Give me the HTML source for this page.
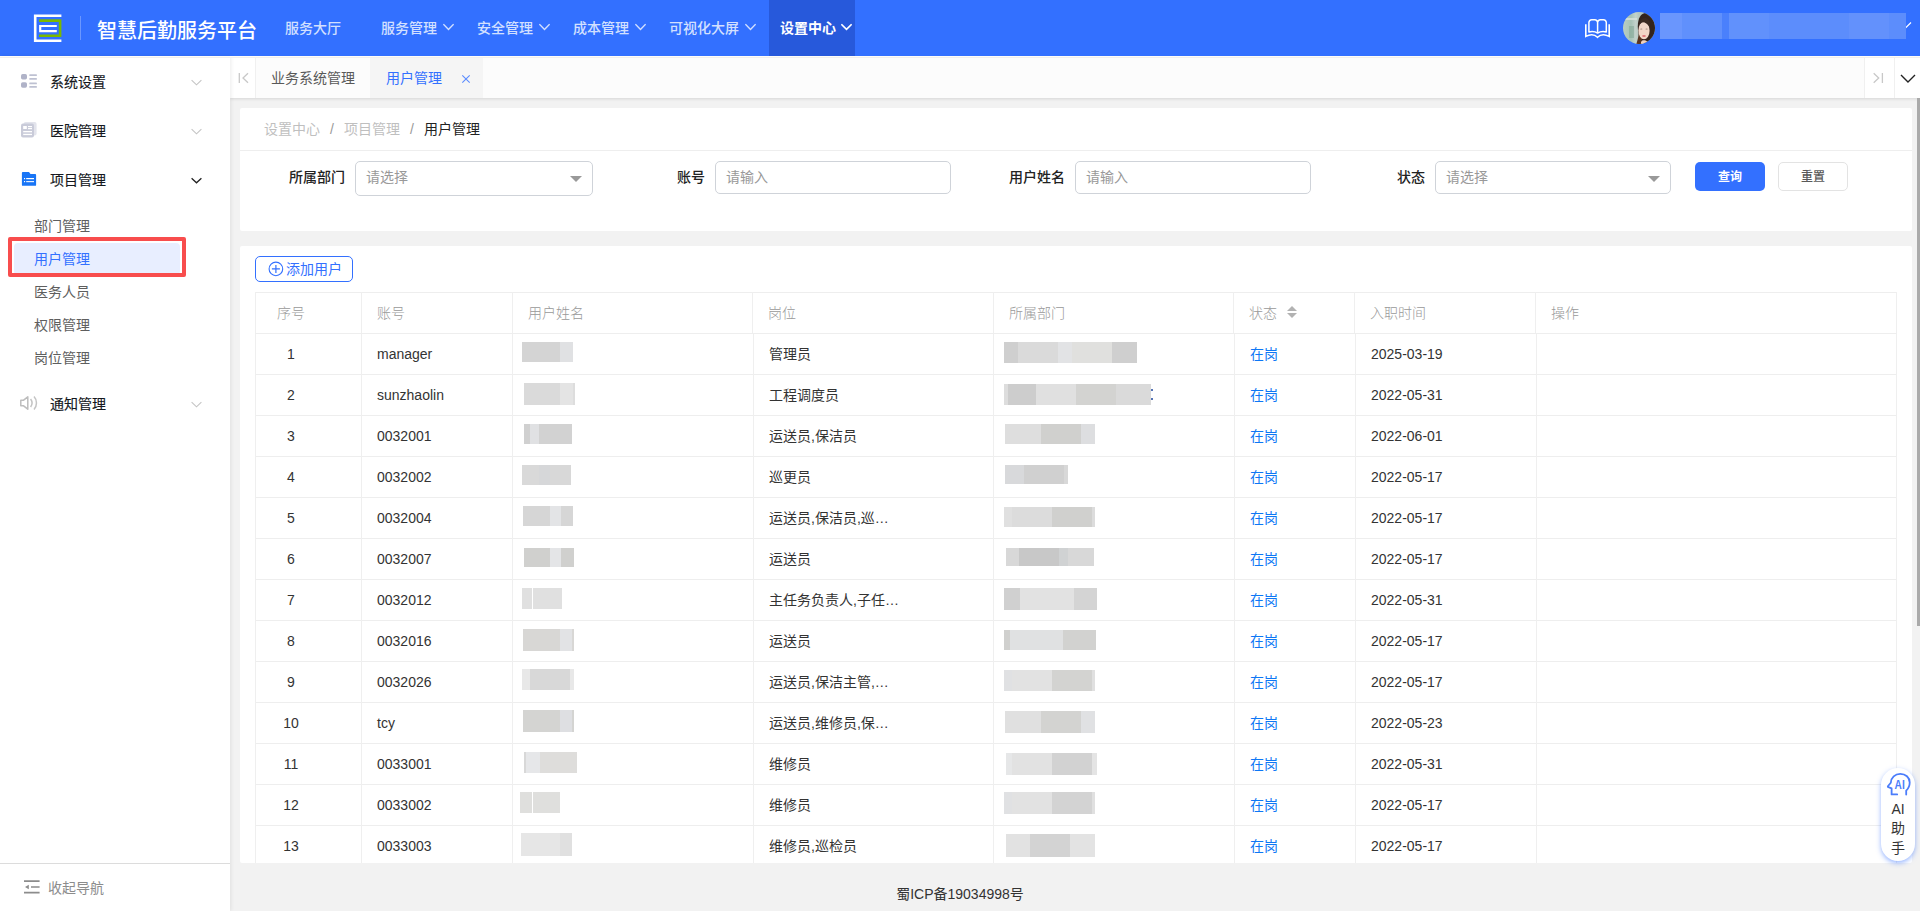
<!DOCTYPE html>
<html lang="zh-CN">
<head>
<meta charset="utf-8">
<title>智慧后勤服务平台</title>
<style>
*{box-sizing:border-box;margin:0;padding:0}
html,body{width:1920px;height:911px;overflow:hidden}
body{position:relative;background:#f2f2f2;font-family:"Liberation Sans","Noto Sans CJK SC",sans-serif;font-size:14px;color:#333;line-height:1}
.abs{position:absolute}
.t{position:absolute;white-space:nowrap;line-height:20px;height:20px}
/* header */
#hd{position:absolute;left:0;top:0;width:1920px;height:56px;background:#3370ff}
#hd .title{left:97px;top:21px;font-size:20px;color:#fff;font-weight:500}
#hd .nav{top:18px;font-size:14px;color:#d3e0ff;font-weight:500}
#hd .nav.on{color:#fff;font-weight:700}
#hd svg.cv{position:absolute;top:23px;width:11px;height:8px}
/* sidebar */
#sb{z-index:2;position:absolute;left:0;top:56px;width:230px;height:855px;background:#fff;box-shadow:1px 0 4px rgba(0,0,0,.08)}
#sb .m1{left:50px;font-size:14px;font-weight:400;color:#15181d;-webkit-text-stroke:0.15px #15181d}
#sb .m2{left:34px;font-size:14px;color:#5e5e5e}
/* tabs */
#tb{position:absolute;left:230px;top:58px;width:1690px;height:40px;background:#fcfcfc;box-shadow:0 1px 3px rgba(0,0,0,.12)}
/* panels */
.pn{position:absolute;background:#fff;left:240px;width:1672px;border-radius:2px}
.lb{font-weight:500;color:#222}
.inp{position:absolute;top:161px;height:33px;border:1px solid #cfd3d9;border-radius:5px;background:#fff}
.ph{color:#999}
.th{color:#999;font-weight:300}
.td{color:#333}
/* table */
#tbl{position:absolute;left:255px;top:292px;width:1642px;border-collapse:collapse;table-layout:fixed;font-size:14px}
</style>
</head>
<body>
<div id="hd">
<svg class="abs" style="left:33px;top:13px" width="30" height="30" viewBox="0 0 30 30">
<path d="M28.4 2.7H2.2V27.7H28.4" fill="none" stroke="#fff" stroke-width="2.6"/>
<path d="M6 7.6H27.1V22.8H6" fill="none" stroke="#7ab800" stroke-width="2.6"/>
<path d="M23.8 13H7.2V18.1H23.8" fill="none" stroke="#fff" stroke-width="2.2"/>
</svg>
<div class="abs" style="left:80px;top:16px;width:1px;height:24px;background:rgba(255,255,255,.28)"></div>
<div class="t title">智慧后勤服务平台</div>
<div class="t nav" style="left:285px">服务大厅</div>
<div class="t nav" style="left:381px">服务管理</div><svg class="cv" style="left:443px" viewBox="0 0 11 8"><path d="M0.4 1.2L5.5 6.4L10.6 1.2" fill="none" stroke="#d3e0ff" stroke-width="1.4"/></svg>
<div class="t nav" style="left:477px">安全管理</div><svg class="cv" style="left:539px" viewBox="0 0 11 8"><path d="M0.4 1.2L5.5 6.4L10.6 1.2" fill="none" stroke="#d3e0ff" stroke-width="1.4"/></svg>
<div class="t nav" style="left:573px">成本管理</div><svg class="cv" style="left:635px" viewBox="0 0 11 8"><path d="M0.4 1.2L5.5 6.4L10.6 1.2" fill="none" stroke="#d3e0ff" stroke-width="1.4"/></svg>
<div class="t nav" style="left:669px">可视化大屏</div><svg class="cv" style="left:745px" viewBox="0 0 11 8"><path d="M0.4 1.2L5.5 6.4L10.6 1.2" fill="none" stroke="#d3e0ff" stroke-width="1.4"/></svg>
<div class="abs" style="left:769px;top:0;width:86px;height:56px;background:#2759db"></div>
<div class="t nav on" style="left:780px">设置中心</div><svg class="cv" style="left:841px" viewBox="0 0 11 8"><path d="M0.4 1.2L5.5 6.4L10.6 1.2" fill="none" stroke="#fff" stroke-width="1.6"/></svg>
<svg class="abs" style="left:1583px;top:16px" width="30" height="24" viewBox="0 0 30 24">
<path d="M14.600 6.600V16.600M14.600 6.600C14.600 5 13.400 3.800 11.800 3.800H8.700C7.100 3.800 5.900 5 5.900 6.600V15.900C9.200 15.200 12.200 15.500 14.600 17.100C17 15.500 20 15.200 23.300 15.900V6.600C23.300 5 22.100 3.800 20.500 3.800H17.400C15.800 3.800 14.600 5 14.600 6.600Z" fill="none" stroke="#fff" stroke-width="1.500" stroke-linejoin="round"/>
<path d="M2.800 8.200V20.400C7.400 18 11.600 18.400 14.500 21.300C17.400 18.400 21.600 18 26.200 20.400V8.200" fill="none" stroke="#fff" stroke-width="1.600" stroke-linejoin="miter"/>
</svg>
<svg class="abs" style="left:1623px;top:12px" width="32" height="32" viewBox="0 0 32 32">
<defs><clipPath id="avc"><circle cx="16" cy="16" r="16"/></clipPath>
<linearGradient id="avg" x1="0" y1="0" x2="1" y2="0"><stop offset="0" stop-color="#b9cdc3"/><stop offset="0.250" stop-color="#a7c3b7"/><stop offset="0.400" stop-color="#c3d2cc"/><stop offset="0.500" stop-color="#b4c6be"/></linearGradient></defs>
<g clip-path="url(#avc)">
<rect width="32" height="32" fill="url(#avg)"/>
<rect x="6" y="14" width="5" height="12" fill="#7fa594" opacity=".55"/>
<rect x="2" y="6" width="12" height="2" fill="#d8e2dc" opacity=".8"/>
<path d="M15 18C14 8 17 1 23 1C29 1 33 8 32 20C31.500 26 30 30 28 32H22L16 24Z" fill="#33241d"/>
<path d="M16.500 18C15.500 24 14.500 29 13 33H19V24Z" fill="#5a3420"/>
<ellipse cx="21" cy="18.500" rx="5.600" ry="8.800" fill="#f1d6c7"/>
<path d="M15.500 14C16.500 8 20 5 24 6.500C27 8 27.500 12 27 16C25 11.500 21 9.500 18 10.500C17 11.500 16.200 13 15.500 14Z" fill="#3a2920"/>
<path d="M18 30C19 27.500 23 27.500 24.500 30V33H18Z" fill="#f3d2bd"/>
<ellipse cx="18.300" cy="17" rx="1.100" ry=".6" fill="#a38778"/><ellipse cx="23.600" cy="17" rx="1.100" ry=".6" fill="#a38778"/>
<ellipse cx="21" cy="24" rx="1.900" ry=".9" fill="#e0767a"/>
</g></svg>
<svg class="abs" style="left:1896px;top:22px" width="16" height="9" viewBox="0 0 16 9"><path d="M1 1.500L8 7.500L15 0.500" fill="none" stroke="#fff" stroke-width="1.200"/></svg>
<div class="abs" style="left:1660px;top:13px;width:246px;height:26px;background:#5c8dfc"></div>
<div class="abs" style="left:1660px;top:13px;width:22px;height:26px;background:#6a96fd"></div>
<div class="abs" style="left:1682px;top:13px;width:40px;height:26px;background:#6090fc"></div>
<div class="abs" style="left:1722px;top:13px;width:7px;height:26px;background:#4a80fc"></div>
<div class="abs" style="left:1729px;top:13px;width:40px;height:26px;background:#6191fc"></div>
<div class="abs" style="left:1849px;top:13px;width:40px;height:26px;background:#6391fc"></div>
</div>
<div id="sb">
<!-- icons -->
<svg class="abs" style="left:20px;top:17px" width="18" height="16" viewBox="0 0 18 16">
<rect x="1" y="1.100" width="6" height="5.400" rx="1.700" fill="#b0b3c8"/><rect x="1" y="9.200" width="6" height="5.500" rx="1.700" fill="#b0b3c8"/>
<rect x="9.300" y="1.300" width="7.600" height="1.800" rx="0.500" fill="#bec1d2"/><rect x="9.300" y="4.900" width="7.600" height="1.800" rx="0.500" fill="#bec1d2"/>
<rect x="9.300" y="9.400" width="7.600" height="1.800" rx="0.500" fill="#bec1d2"/><rect x="9.300" y="13" width="7.600" height="1.800" rx="0.500" fill="#bec1d2"/>
</svg>
<svg class="abs" style="left:20px;top:65px" width="18" height="18" viewBox="0 0 18 18">
<rect x="3.600" y="1" width="13" height="13.500" rx="2" fill="#e3e4ec"/>
<rect x="1" y="2.600" width="13" height="14" rx="2" fill="#c9cbd9"/>
<rect x="3.200" y="5" width="3.600" height="3" fill="#fff"/><rect x="8" y="5" width="4" height="1.200" fill="#fff"/><rect x="8" y="7" width="4" height="1.200" fill="#fff"/>
<rect x="3.200" y="10" width="8.800" height="1.300" fill="#fff"/><rect x="3.200" y="12.800" width="8.800" height="1.300" fill="#fff"/>
</svg>
<svg class="abs" style="left:21px;top:116px" width="16" height="15" viewBox="0 0 16 15">
<path d="M1.800 0H8L9.500 2H14.200Q15.100 2 15.100 2.900V12.900Q15.100 13.800 14.200 13.800H1.800Q0.900 13.800 0.900 12.900V0.900Q0.900 0 1.800 0Z" fill="#1875f6"/>
<rect x="5.200" y="6" width="7.800" height="1.200" fill="#fff"/><rect x="5.200" y="9" width="7.800" height="1.200" fill="#e8f1ff"/>
<rect x="3" y="6" width="1.100" height="1.200" fill="#fff"/><rect x="3" y="9" width="1.100" height="1.200" fill="#fff"/>
</svg>
<svg class="abs" style="left:19px;top:338px" width="20" height="18" viewBox="0 0 20 18">
<path d="M1.800 6.200H4.600L8.800 2.800V15.200L4.600 11.800H1.800Z" fill="none" stroke="#bdbdbd" stroke-width="1.500" stroke-linejoin="round"/>
<path d="M11.600 5C13.300 7.300 13.300 10.700 11.600 13" fill="none" stroke="#c4c4c4" stroke-width="1.500"/>
<path d="M15 2.600C18.300 6.200 18.300 11.800 15 15.400" fill="none" stroke="#c4c4c4" stroke-width="1.500"/>
</svg>
<div class="t m1" style="top:16px">系统设置</div>
<div class="t m1" style="top:65px">医院管理</div>
<div class="t m1" style="top:114px">项目管理</div>
<div class="t m1" style="top:338px">通知管理</div>
<svg class="abs" style="left:191px;top:23px" width="11" height="8" viewBox="0 0 11 8"><path d="M0.600 1.200L5.500 5.800L10.400 1.200" fill="none" stroke="#c4c4c4" stroke-width="1.100"/></svg>
<svg class="abs" style="left:191px;top:72px" width="11" height="8" viewBox="0 0 11 8"><path d="M0.600 1.200L5.500 5.800L10.400 1.200" fill="none" stroke="#c4c4c4" stroke-width="1.100"/></svg>
<svg class="abs" style="left:191px;top:121px" width="11" height="8" viewBox="0 0 11 8"><path d="M0.600 1.200L5.500 5.800L10.400 1.200" fill="none" stroke="#222" stroke-width="1.300"/></svg>
<svg class="abs" style="left:191px;top:345px" width="11" height="8" viewBox="0 0 11 8"><path d="M0.600 1.200L5.500 5.800L10.400 1.200" fill="none" stroke="#c4c4c4" stroke-width="1.100"/></svg>
<div class="abs" style="left:14px;top:187px;width:166px;height:32px;background:#e8eeff;border-radius:4px"></div>
<div class="abs" style="left:8px;top:181px;width:178px;height:40px;border:4px solid #f84d4d;border-radius:2px"></div>
<div class="t m2" style="top:160px">部门管理</div>
<div class="t m2" style="top:193px;color:#3370ff">用户管理</div>
<div class="t m2" style="top:226px">医务人员</div>
<div class="t m2" style="top:259px">权限管理</div>
<div class="t m2" style="top:292px">岗位管理</div>
<div class="abs" style="left:0;top:807px;width:230px;height:1px;background:#dcdcdc"></div>
<svg class="abs" style="left:24px;top:824px" width="16" height="14" viewBox="0 0 16 14">
<path d="M0 1.100H15.600M7 7H15.600M0 12.600H15.600" stroke="#8c8c8c" stroke-width="1.700" fill="none"/><path d="M1 7L4.800 4.800V9.200Z" fill="#8c8c8c"/>
</svg>
<div class="t" style="left:48px;top:822px;color:#8c8c8c">收起导航</div>
</div>
<div class="abs" style="left:0;top:56px;width:1920px;height:1px;background:#fdfcf8;z-index:3"></div><div class="abs" style="left:0;top:57px;width:1920px;height:1px;background:#efefef;z-index:3"></div>
<div id="tb">
<div class="abs" style="left:0;top:0;width:26px;height:40px;background:#fff;border-right:1px solid #f0f0f0"></div>
<svg class="abs" style="left:7.600px;top:14.300px" width="12" height="12" viewBox="0 0 12 12"><path d="M1.300 1V11M10 1.200L5 6L10 10.800" fill="none" stroke="#c8c8c8" stroke-width="1.300"/></svg>
<div class="abs" style="left:140px;top:0;width:113px;height:40px;background:#f5f5f5"></div>
<div class="t" style="left:41px;top:10px;color:#595959">业务系统管理</div>
<div class="t" style="left:156px;top:10px;color:#3370ff">用户管理</div>
<svg class="abs" style="left:231px;top:16px" width="10" height="10" viewBox="0 0 10 10"><path d="M1.300 1.300L8.700 8.700M8.700 1.300L1.300 8.700" stroke="#5b8cff" stroke-width="1.100" fill="none"/></svg>
<div class="abs" style="left:1634px;top:0;width:56px;height:40px;background:#fff;border-left:1px solid #f0f0f0"></div>
<div class="abs" style="left:1664px;top:0;width:1px;height:40px;background:#f0f0f0"></div>
<svg class="abs" style="left:1642.300px;top:14.300px" width="12" height="12" viewBox="0 0 12 12"><path d="M10.400 1V11M1.700 1.200L6.700 6L1.700 10.800" fill="none" stroke="#c8c8c8" stroke-width="1.300"/></svg>
<svg class="abs" style="left:1669.600px;top:15.500px" width="16" height="10" viewBox="0 0 16 10"><path d="M1 1L8 8L15 1" fill="none" stroke="#222" stroke-width="1.400"/></svg>
</div>
<div class="pn" style="top:108px;height:123px">
<div class="abs" style="left:0;top:42px;width:1672px;height:1px;background:#eeeeee"></div>
</div>
<div class="t" style="left:264px;top:119px;color:#bfbfbf">设置中心</div>
<div class="t" style="left:330px;top:119px;color:#999">/</div>
<div class="t" style="left:344px;top:119px;color:#bfbfbf">项目管理</div>
<div class="t" style="left:410px;top:119px;color:#999">/</div>
<div class="t" style="left:424px;top:119px;color:#222">用户管理</div>
<div class="t lb" style="left:289px;top:167px">所属部门</div>
<div class="inp" style="left:355px;width:238px;height:35px"></div>
<div class="t ph" style="left:366px;top:167px">请选择</div>
<div class="abs" style="left:570px;top:176px;width:0;height:0;border-left:6px solid transparent;border-right:6px solid transparent;border-top:6px solid #999"></div>
<div class="t lb" style="left:677px;top:167px">账号</div>
<div class="inp" style="left:715px;width:236px"></div>
<div class="t ph" style="left:726px;top:167px">请输入</div>
<div class="t lb" style="left:1009px;top:167px">用户姓名</div>
<div class="inp" style="left:1075px;width:236px"></div>
<div class="t ph" style="left:1086px;top:167px">请输入</div>
<div class="t lb" style="left:1397px;top:167px">状态</div>
<div class="inp" style="left:1435px;width:236px"></div>
<div class="t ph" style="left:1446px;top:167px">请选择</div>
<div class="abs" style="left:1648px;top:176px;width:0;height:0;border-left:6px solid transparent;border-right:6px solid transparent;border-top:6px solid #999"></div>
<div class="abs" style="left:1695px;top:162px;width:70px;height:29px;background:#3370ff;border-radius:5px"></div>
<div class="t" style="left:1695px;top:167px;width:70px;text-align:center;font-size:12px;font-weight:700;color:#fff">查询</div>
<div class="abs" style="left:1778px;top:162px;width:70px;height:29px;background:#fff;border:1px solid #e3e3e3;border-radius:5px"></div>
<div class="t" style="left:1778px;top:167px;width:70px;text-align:center;font-size:12px;font-weight:500;color:#595959">重置</div>
<div class="pn" id="p2" style="top:246px;height:617px;overflow:hidden">
<div class="abs" style="left:15px;top:10px;width:98px;height:26px;border:1px solid #3370ff;border-radius:5px"></div>
<svg class="abs" style="left:28px;top:15px" width="16" height="16" viewBox="0 0 16 16"><circle cx="7.900" cy="7.900" r="6.800" fill="none" stroke="#3370ff" stroke-width="1.100"/><path d="M3.900 7.900H11.900M7.900 3.900V11.900" stroke="#3370ff" stroke-width="1.200" fill="none"/></svg>
<div class="t" style="left:46px;top:13px;color:#3370ff">添加用户</div>
<div class="abs" style="left:15px;top:46px;width:1642px;height:1px;background:#eeeeee"></div>
<div class="abs" style="left:15px;top:87px;width:1642px;height:1px;background:#eeeeee"></div>
<div class="abs" style="left:15px;top:128px;width:1642px;height:1px;background:#eeeeee"></div>
<div class="abs" style="left:15px;top:169px;width:1642px;height:1px;background:#eeeeee"></div>
<div class="abs" style="left:15px;top:210px;width:1642px;height:1px;background:#eeeeee"></div>
<div class="abs" style="left:15px;top:251px;width:1642px;height:1px;background:#eeeeee"></div>
<div class="abs" style="left:15px;top:292px;width:1642px;height:1px;background:#eeeeee"></div>
<div class="abs" style="left:15px;top:333px;width:1642px;height:1px;background:#eeeeee"></div>
<div class="abs" style="left:15px;top:374px;width:1642px;height:1px;background:#eeeeee"></div>
<div class="abs" style="left:15px;top:415px;width:1642px;height:1px;background:#eeeeee"></div>
<div class="abs" style="left:15px;top:456px;width:1642px;height:1px;background:#eeeeee"></div>
<div class="abs" style="left:15px;top:497px;width:1642px;height:1px;background:#eeeeee"></div>
<div class="abs" style="left:15px;top:538px;width:1642px;height:1px;background:#eeeeee"></div>
<div class="abs" style="left:15px;top:579px;width:1642px;height:1px;background:#eeeeee"></div>
<div class="abs" style="left:15px;top:620px;width:1642px;height:1px;background:#eeeeee"></div>
<div class="abs" style="left:15px;top:46px;width:1px;height:41px;background:#efefef"></div><div class="abs" style="left:15px;top:88px;width:1px;height:560px;background:#efefef"></div>
<div class="abs" style="left:121px;top:46px;width:1px;height:41px;background:#efefef"></div><div class="abs" style="left:121px;top:88px;width:1px;height:560px;background:#efefef"></div>
<div class="abs" style="left:272px;top:46px;width:1px;height:41px;background:#efefef"></div><div class="abs" style="left:272px;top:88px;width:1px;height:560px;background:#efefef"></div>
<div class="abs" style="left:512px;top:46px;width:1px;height:41px;background:#efefef"></div><div class="abs" style="left:513px;top:88px;width:1px;height:560px;background:#efefef"></div>
<div class="abs" style="left:753px;top:46px;width:1px;height:41px;background:#efefef"></div><div class="abs" style="left:753px;top:88px;width:1px;height:560px;background:#efefef"></div>
<div class="abs" style="left:993px;top:46px;width:1px;height:41px;background:#efefef"></div><div class="abs" style="left:994px;top:88px;width:1px;height:560px;background:#efefef"></div>
<div class="abs" style="left:1114px;top:46px;width:1px;height:41px;background:#efefef"></div><div class="abs" style="left:1115px;top:88px;width:1px;height:560px;background:#efefef"></div>
<div class="abs" style="left:1295px;top:46px;width:1px;height:41px;background:#efefef"></div><div class="abs" style="left:1296px;top:88px;width:1px;height:560px;background:#efefef"></div>
<div class="abs" style="left:1656px;top:46px;width:1px;height:41px;background:#efefef"></div><div class="abs" style="left:1656px;top:88px;width:1px;height:560px;background:#efefef"></div>
<div class="t th" style="left:37px;top:57px">序号</div>
<div class="t th" style="left:137px;top:57px">账号</div>
<div class="t th" style="left:288px;top:57px">用户姓名</div>
<div class="t th" style="left:528px;top:57px">岗位</div>
<div class="t th" style="left:769px;top:57px">所属部门</div>
<div class="t th" style="left:1009px;top:57px">状态</div>
<div class="t th" style="left:1130px;top:57px">入职时间</div>
<div class="t th" style="left:1311px;top:57px">操作</div>
<div class="abs" style="left:1047px;top:60px;width:0;height:0;border-left:5px solid transparent;border-right:5px solid transparent;border-bottom:5px solid #b2b2b2"></div>
<div class="abs" style="left:1047px;top:67px;width:0;height:0;border-left:5px solid transparent;border-right:5px solid transparent;border-top:5px solid #b2b2b2"></div>
<div class="t td" style="left:31px;top:98px;width:40px;text-align:center">1</div>
<div class="t td" style="left:137px;top:98px">manager</div>
<div class="t td" style="left:529px;top:98px">管理员</div>
<div class="t td" style="left:1010px;top:98px;color:#0d77f5">在岗</div>
<div class="t td" style="left:1131px;top:98px">2025-03-19</div>
<div class="abs" style="left:282px;top:96px;width:38px;height:20px;background:#d4d4d4"></div>
<div class="abs" style="left:320px;top:96px;width:13px;height:20px;background:#e0e1e3"></div>
<div class="abs" style="left:764px;top:96px;width:14px;height:21px;background:#cfcfcf"></div>
<div class="abs" style="left:778px;top:96px;width:40px;height:21px;background:#dadada"></div>
<div class="abs" style="left:818px;top:96px;width:14px;height:21px;background:#e2e3e5"></div>
<div class="abs" style="left:832px;top:96px;width:40px;height:21px;background:#e0e0de"></div>
<div class="abs" style="left:872px;top:96px;width:25px;height:21px;background:#cfcfcf"></div>
<div class="t td" style="left:31px;top:139px;width:40px;text-align:center">2</div>
<div class="t td" style="left:137px;top:139px">sunzhaolin</div>
<div class="t td" style="left:529px;top:139px">工程调度员</div>
<div class="t td" style="left:1010px;top:139px;color:#0d77f5">在岗</div>
<div class="t td" style="left:1131px;top:139px">2022-05-31</div>
<div class="abs" style="left:284px;top:137px;width:36px;height:22px;background:#dadada"></div>
<div class="abs" style="left:320px;top:137px;width:13px;height:22px;background:#e4e4e4"></div>
<div class="abs" style="left:333px;top:137px;width:2px;height:22px;background:#dddddd"></div>
<div class="abs" style="left:764px;top:138px;width:4px;height:21px;background:#dddddd"></div>
<div class="abs" style="left:768px;top:138px;width:28px;height:21px;background:#cdcdcd"></div>
<div class="abs" style="left:796px;top:138px;width:40px;height:21px;background:#e0e0e0"></div>
<div class="abs" style="left:836px;top:138px;width:40px;height:21px;background:#d3d3d1"></div>
<div class="abs" style="left:876px;top:138px;width:35px;height:21px;background:#dadada"></div>
<div class="t td" style="left:31px;top:180px;width:40px;text-align:center">3</div>
<div class="t td" style="left:137px;top:180px">0032001</div>
<div class="t td" style="left:529px;top:180px">运送员,保洁员</div>
<div class="t td" style="left:1010px;top:180px;color:#0d77f5">在岗</div>
<div class="t td" style="left:1131px;top:180px">2022-06-01</div>
<div class="abs" style="left:284px;top:178px;width:6px;height:20px;background:#d0d0d0"></div>
<div class="abs" style="left:290px;top:178px;width:9px;height:20px;background:#e0e1e3"></div>
<div class="abs" style="left:299px;top:178px;width:33px;height:20px;background:#d2d2d2"></div>
<div class="abs" style="left:765px;top:178px;width:36px;height:20px;background:#dedede"></div>
<div class="abs" style="left:801px;top:178px;width:40px;height:20px;background:#d0d0ce"></div>
<div class="abs" style="left:841px;top:178px;width:14px;height:20px;background:#dddee0"></div>
<div class="t td" style="left:31px;top:221px;width:40px;text-align:center">4</div>
<div class="t td" style="left:137px;top:221px">0032002</div>
<div class="t td" style="left:529px;top:221px">巡更员</div>
<div class="t td" style="left:1010px;top:221px;color:#0d77f5">在岗</div>
<div class="t td" style="left:1131px;top:221px">2022-05-17</div>
<div class="abs" style="left:282px;top:219px;width:17px;height:20px;background:#d9d9d9"></div>
<div class="abs" style="left:299px;top:219px;width:11px;height:20px;background:#d6d7d9"></div>
<div class="abs" style="left:310px;top:219px;width:21px;height:20px;background:#d8d8d8"></div>
<div class="abs" style="left:765px;top:219px;width:19px;height:19px;background:#d8d9db"></div>
<div class="abs" style="left:784px;top:219px;width:40px;height:19px;background:#d0d0d0"></div>
<div class="abs" style="left:824px;top:219px;width:4px;height:19px;background:#d8d8d8"></div>
<div class="t td" style="left:31px;top:262px;width:40px;text-align:center">5</div>
<div class="t td" style="left:137px;top:262px">0032004</div>
<div class="t td" style="left:529px;top:262px">运送员,保洁员,巡…</div>
<div class="t td" style="left:1010px;top:262px;color:#0d77f5">在岗</div>
<div class="t td" style="left:1131px;top:262px">2022-05-17</div>
<div class="abs" style="left:283px;top:260px;width:27px;height:20px;background:#d6d6d6"></div>
<div class="abs" style="left:310px;top:260px;width:11px;height:20px;background:#e3e4e6"></div>
<div class="abs" style="left:321px;top:260px;width:12px;height:20px;background:#d6d6d6"></div>
<div class="abs" style="left:764px;top:261px;width:8px;height:20px;background:#e0e0e0"></div>
<div class="abs" style="left:772px;top:261px;width:40px;height:20px;background:#dcdcdc"></div>
<div class="abs" style="left:812px;top:261px;width:40px;height:20px;background:#d0d0ce"></div>
<div class="abs" style="left:852px;top:261px;width:3px;height:20px;background:#dcdcdc"></div>
<div class="t td" style="left:31px;top:303px;width:40px;text-align:center">6</div>
<div class="t td" style="left:137px;top:303px">0032007</div>
<div class="t td" style="left:529px;top:303px">运送员</div>
<div class="t td" style="left:1010px;top:303px;color:#0d77f5">在岗</div>
<div class="t td" style="left:1131px;top:303px">2022-05-17</div>
<div class="abs" style="left:284px;top:302px;width:26px;height:19px;background:#d0d0ce"></div>
<div class="abs" style="left:310px;top:302px;width:11px;height:19px;background:#e4e5e7"></div>
<div class="abs" style="left:321px;top:302px;width:13px;height:19px;background:#d0d0ce"></div>
<div class="abs" style="left:766px;top:302px;width:13px;height:18px;background:#d8d8d8"></div>
<div class="abs" style="left:779px;top:302px;width:40px;height:18px;background:#c8c8c8"></div>
<div class="abs" style="left:819px;top:302px;width:9px;height:18px;background:#d0d2d3"></div>
<div class="abs" style="left:828px;top:302px;width:26px;height:18px;background:#d8d8d8"></div>
<div class="t td" style="left:31px;top:344px;width:40px;text-align:center">7</div>
<div class="t td" style="left:137px;top:344px">0032012</div>
<div class="t td" style="left:529px;top:344px">主任务负责人,子任…</div>
<div class="t td" style="left:1010px;top:344px;color:#0d77f5">在岗</div>
<div class="t td" style="left:1131px;top:344px">2022-05-31</div>
<div class="abs" style="left:282px;top:342px;width:10px;height:21px;background:#e0e0e0"></div>
<div class="abs" style="left:293px;top:342px;width:29px;height:21px;background:#e0e0e0"></div>
<div class="abs" style="left:764px;top:342px;width:16px;height:22px;background:#d0d0d0"></div>
<div class="abs" style="left:780px;top:342px;width:54px;height:22px;background:#e2e2e2"></div>
<div class="abs" style="left:834px;top:342px;width:23px;height:22px;background:#d4d4d4"></div>
<div class="t td" style="left:31px;top:385px;width:40px;text-align:center">8</div>
<div class="t td" style="left:137px;top:385px">0032016</div>
<div class="t td" style="left:529px;top:385px">运送员</div>
<div class="t td" style="left:1010px;top:385px;color:#0d77f5">在岗</div>
<div class="t td" style="left:1131px;top:385px">2022-05-17</div>
<div class="abs" style="left:283px;top:383px;width:37px;height:22px;background:#d8d7d5"></div>
<div class="abs" style="left:320px;top:383px;width:12px;height:22px;background:#e2e3e5"></div>
<div class="abs" style="left:332px;top:383px;width:2px;height:22px;background:#d8d7d5"></div>
<div class="abs" style="left:764px;top:384px;width:6px;height:20px;background:#d0d0ce"></div>
<div class="abs" style="left:770px;top:384px;width:53px;height:20px;background:#e0e1e2"></div>
<div class="abs" style="left:823px;top:384px;width:33px;height:20px;background:#d2d2d0"></div>
<div class="t td" style="left:31px;top:426px;width:40px;text-align:center">9</div>
<div class="t td" style="left:137px;top:426px">0032026</div>
<div class="t td" style="left:529px;top:426px">运送员,保洁主管,…</div>
<div class="t td" style="left:1010px;top:426px;color:#0d77f5">在岗</div>
<div class="t td" style="left:1131px;top:426px">2022-05-17</div>
<div class="abs" style="left:282px;top:423px;width:8px;height:21px;background:#e8e8e8"></div>
<div class="abs" style="left:290px;top:423px;width:40px;height:21px;background:#d8d8d8"></div>
<div class="abs" style="left:330px;top:423px;width:4px;height:21px;background:#e8e8e8"></div>
<div class="abs" style="left:764px;top:424px;width:8px;height:21px;background:#e0e1e3"></div>
<div class="abs" style="left:772px;top:424px;width:40px;height:21px;background:#e2e2e2"></div>
<div class="abs" style="left:812px;top:424px;width:40px;height:21px;background:#d3d3d1"></div>
<div class="abs" style="left:852px;top:424px;width:3px;height:21px;background:#e0e0e0"></div>
<div class="t td" style="left:31px;top:467px;width:40px;text-align:center">10</div>
<div class="t td" style="left:137px;top:467px">tcy</div>
<div class="t td" style="left:529px;top:467px">运送员,维修员,保…</div>
<div class="t td" style="left:1010px;top:467px;color:#0d77f5">在岗</div>
<div class="t td" style="left:1131px;top:467px">2022-05-23</div>
<div class="abs" style="left:283px;top:464px;width:37px;height:22px;background:#d4d4d2"></div>
<div class="abs" style="left:320px;top:464px;width:12px;height:22px;background:#dedfe2"></div>
<div class="abs" style="left:332px;top:464px;width:2px;height:22px;background:#d4d4d2"></div>
<div class="abs" style="left:765px;top:465px;width:36px;height:22px;background:#e0e0e0"></div>
<div class="abs" style="left:801px;top:465px;width:40px;height:22px;background:#d3d3d1"></div>
<div class="abs" style="left:841px;top:465px;width:14px;height:22px;background:#e0e1e3"></div>
<div class="t td" style="left:31px;top:508px;width:40px;text-align:center">11</div>
<div class="t td" style="left:137px;top:508px">0033001</div>
<div class="t td" style="left:529px;top:508px">维修员</div>
<div class="t td" style="left:1010px;top:508px;color:#0d77f5">在岗</div>
<div class="t td" style="left:1131px;top:508px">2022-05-31</div>
<div class="abs" style="left:284px;top:506px;width:2px;height:21px;background:#d8d8d8"></div>
<div class="abs" style="left:286px;top:506px;width:14px;height:21px;background:#e6e7e9"></div>
<div class="abs" style="left:300px;top:506px;width:37px;height:21px;background:#dedddb"></div>
<div class="abs" style="left:766px;top:507px;width:6px;height:22px;background:#e6e7e8"></div>
<div class="abs" style="left:772px;top:507px;width:40px;height:22px;background:#e2e2e2"></div>
<div class="abs" style="left:812px;top:507px;width:40px;height:22px;background:#d2d2d2"></div>
<div class="abs" style="left:852px;top:507px;width:5px;height:22px;background:#e4e4e4"></div>
<div class="t td" style="left:31px;top:549px;width:40px;text-align:center">12</div>
<div class="t td" style="left:137px;top:549px">0033002</div>
<div class="t td" style="left:529px;top:549px">维修员</div>
<div class="t td" style="left:1010px;top:549px;color:#0d77f5">在岗</div>
<div class="t td" style="left:1131px;top:549px">2022-05-17</div>
<div class="abs" style="left:280px;top:546px;width:12px;height:21px;background:#dfdfdd"></div>
<div class="abs" style="left:293px;top:546px;width:27px;height:21px;background:#dfdfdd"></div>
<div class="abs" style="left:764px;top:546px;width:8px;height:22px;background:#e0e1e3"></div>
<div class="abs" style="left:772px;top:546px;width:40px;height:22px;background:#e2e2e2"></div>
<div class="abs" style="left:812px;top:546px;width:40px;height:22px;background:#d3d3d3"></div>
<div class="abs" style="left:852px;top:546px;width:3px;height:22px;background:#e0e0e0"></div>
<div class="t td" style="left:31px;top:590px;width:40px;text-align:center">13</div>
<div class="t td" style="left:137px;top:590px">0033003</div>
<div class="t td" style="left:529px;top:590px">维修员,巡检员</div>
<div class="t td" style="left:1010px;top:590px;color:#0d77f5">在岗</div>
<div class="t td" style="left:1131px;top:590px">2022-05-17</div>
<div class="abs" style="left:281px;top:587px;width:39px;height:23px;background:#e6e6e6"></div>
<div class="abs" style="left:320px;top:587px;width:12px;height:23px;background:#e0e0e0"></div>
<div class="abs" style="left:766px;top:588px;width:24px;height:23px;background:#e2e2e2"></div>
<div class="abs" style="left:790px;top:588px;width:40px;height:23px;background:#d3d3d3"></div>
<div class="abs" style="left:830px;top:588px;width:25px;height:23px;background:#e3e3e3"></div>
<div class="abs" style="left:911px;top:143px;width:2px;height:2px;background:#5573b5"></div><div class="abs" style="left:911px;top:152px;width:2px;height:2px;background:#5573b5"></div>
</div>
<div class="t" style="left:0;top:884px;width:1920px;text-align:center;color:#333">蜀ICP备19034998号</div>
<div class="abs" style="left:1881px;top:768px;width:34px;height:93px;border-radius:17px;background:#fff;box-shadow:0 2px 5px rgba(51,112,255,.5)"></div>
<svg class="abs" style="left:1886px;top:772px" width="26" height="25" viewBox="0 0 26 25">
<path d="M20.200 22.600V18.600C22.500 16.300 23.700 13.300 23.700 10.400C23.700 5.500 19.500 1.800 14.300 1.800C9.100 1.800 5 5.500 4.800 10.700L1.900 14.200Q1.600 14.900 2.400 15.200L5.600 16.400V22.400H11.200" fill="none" stroke="#4b7dfb" stroke-width="1.800" stroke-linejoin="round" stroke-linecap="round"/>
<text transform="translate(8.600,16.700) scale(0.780,1)" font-family="Liberation Sans, sans-serif" font-size="13" font-weight="700" fill="#4b7dfb">AI</text>
</svg>
<div class="t" style="left:1881px;top:799px;width:34px;text-align:center;color:#333">AI</div>
<div class="t" style="left:1881px;top:818px;width:34px;text-align:center;color:#333">助</div>
<div class="t" style="left:1881px;top:838px;width:34px;text-align:center;color:#333">手</div>
<div class="abs" style="left:1917px;top:98px;width:3px;height:528px;background:#aaa"></div>
</body>
</html>
